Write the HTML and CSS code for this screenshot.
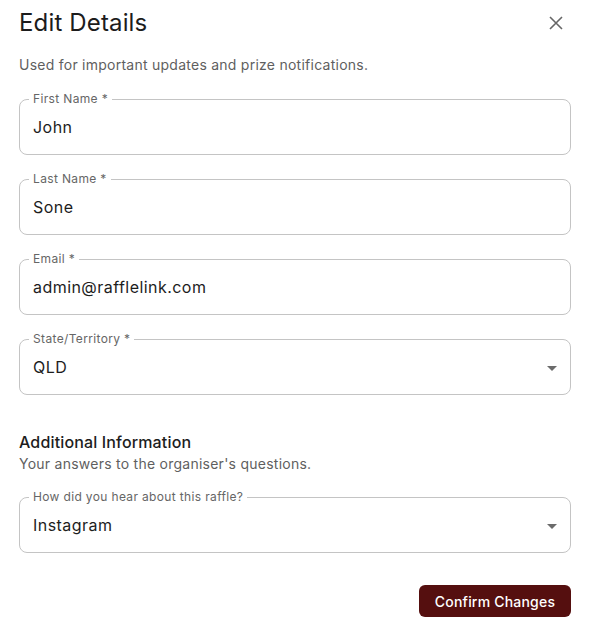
FILE: index.html
```html
<!DOCTYPE html>
<html lang="en">
<head>
<meta charset="utf-8">
<title>Edit Details</title>
<link rel="stylesheet" href="styles.css">
</head>
<body>
<div class="dialog">
  <div class="header">
    <h1 class="title">Edit Details</h1>
    <button class="close" aria-label="Close">
      <svg width="14" height="14" viewBox="0 0 14 14"><path d="M1 1 L13 13 M13 1 L1 13" stroke="#666" stroke-width="1.6" fill="none"/></svg>
    </button>
  </div>
  <p class="sub">Used for important updates and prize notifications.</p>

  <div class="fields">
    <div class="field">
      <span class="label">First Name *</span>
      <span class="value">John</span>
    </div>
    <div class="field">
      <span class="label">Last Name *</span>
      <span class="value">Sone</span>
    </div>
    <div class="field">
      <span class="label">Email *</span>
      <span class="value">admin@rafflelink.com</span>
    </div>
    <div class="field">
      <span class="label">State/Territory *</span>
      <span class="value">QLD</span>
      <span class="arrow"></span>
    </div>
  </div>

  <h2 class="section">Additional Information</h2>
  <p class="section-sub">Your answers to the organiser's questions.</p>

  <div class="fields fields-extra">
    <div class="field">
      <span class="label">How did you hear about this raffle?</span>
      <span class="value">Instagram</span>
      <span class="arrow"></span>
    </div>
  </div>

  <div class="actions">
    <button class="confirm">Confirm Changes</button>
  </div>
</div>
</body>
</html>
```

FILE: styles.css
```css
* { box-sizing: border-box; }
body {
  margin: 0;
  background: #fff;
  font-family: Inter, "Noto Sans", sans-serif;
  color: #1d1d1d;
}
.dialog {
  width: 590px;
  padding: 7px 19px 0 19px;
}
.header {
  display: flex;
  align-items: center;
  justify-content: space-between;
  height: 32px;
}
.title {
  margin: 0;
  font-size: 24px;
  font-weight: 400;
  line-height: 32px;
  letter-spacing: 0.15px;
  color: #1c1c1c;
}
.close {
  border: none;
  background: none;
  padding: 0;
  margin-right: 8px;
  width: 14px;
  height: 14px;
  display: flex;
}
.sub {
  margin: 16px 0 0 0;
  font-size: 14px;
  line-height: 20px;
  letter-spacing: 0.25px;
  color: #5f5f5f;
}
.fields {
  display: flex;
  flex-direction: column;
  gap: 24px;
  margin-top: 24px;
}
.field {
  position: relative;
  height: 56px;
  border: 1px solid #c4c4c4;
  border-radius: 8px;
  display: flex;
  align-items: center;
  padding: 0 13px;
}
.label {
  position: absolute;
  top: -8px;
  left: 9px;
  padding: 0 4px;
  background: #fff;
  font-size: 12px;
  line-height: 14px;
  letter-spacing: 0.35px;
  color: #666;
}
.value {
  font-size: 16px;
  color: #1d1d1d;
  letter-spacing: 0.45px;
}
.arrow {
  position: absolute;
  right: 13px;
  top: 26px;
  width: 0;
  height: 0;
  border-left: 5px solid transparent;
  border-right: 5px solid transparent;
  border-top: 5px solid #6b6b6b;
}
.section {
  margin: 35px 0 0 0;
  font-size: 16px;
  font-weight: 500;
  line-height: 24px;
  letter-spacing: 0.15px;
  color: #1d1d1d;
}
.section-sub {
  margin: 0;
  font-size: 14px;
  line-height: 20px;
  letter-spacing: 0.25px;
  color: #5f5f5f;
}
.fields-extra { margin-top: 23px; }
.actions {
  display: flex;
  justify-content: flex-end;
  margin-top: 32px;
}
.confirm {
  width: 152px;
  height: 32px;
  border: none;
  border-radius: 6px;
  background: #550f0f;
  color: #fff;
  font-family: Inter, "Noto Sans", sans-serif;
  font-size: 14px;
  font-weight: 500;
  letter-spacing: 0.2px;
}
```
